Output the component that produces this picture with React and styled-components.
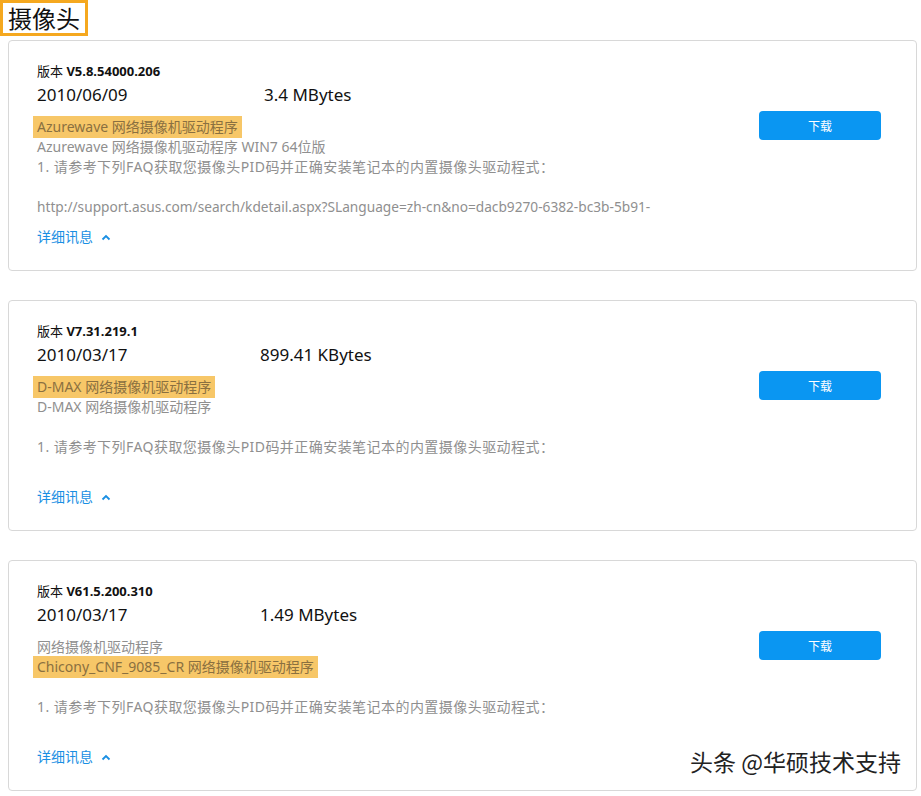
import React from 'react'
import styled, { createGlobalStyle } from 'styled-components'

const GlobalStyle = createGlobalStyle`
  body {
    margin: 0;
    background: #fff;
    font-family: "Noto Sans", "Noto Sans CJK SC", sans-serif;
  }
`

const Page = styled.div`
  position: relative;
  padding: 0 4px 4px 8px;
`

const Heading = styled.div`
  display: inline-block;
  margin-left: -8px;
  padding: 0 5px;
  height: 30px;
  line-height: 30px;
  border: 3px solid #f5a81f;
  font-size: 24px;
  color: #111;
  font-family: "Noto Sans CJK SC", sans-serif;
`

const List = styled.div`
  display: flex;
  flex-direction: column;
  gap: 29px;
  margin-top: 4px;
`

const Card = styled.div`
  display: flex;
  justify-content: space-between;
  align-items: flex-start;
  height: 231px;
  box-sizing: border-box;
  border: 1px solid #d8d8d8;
  border-radius: 4px;
  padding: 21px 35px 0 28px;
`

const Info = styled.div`
  display: flex;
  flex-direction: column;
`

const Version = styled.div`
  font-size: 13px;
  line-height: 18px;
  color: #111;
  b {
    font-weight: 700;
  }
`

const Meta = styled.div`
  display: flex;
  font-size: 17px;
  line-height: 30px;
  color: #111;
  margin-bottom: 7px;
`

const Date = styled.span`
  width: ${(p) => p.$w}px;
`

const Line = styled.div`
  font-size: ${(p) => (p.$url ? 13.7 : 14)}px;
  letter-spacing: ${(p) => (p.$wide ? 0.45 : 0)}px;
  line-height: 20px;
  height: 20px;
  color: #8f8f8f;
  white-space: nowrap;
`

const Mark = styled.span`
  background: #f7c768;
  color: #8a7040;
  padding: 1px 4px 2px;
  margin-left: -4px;
`

const More = styled.div`
  display: flex;
  align-items: center;
  gap: 8px;
  margin-top: 10px;
  font-size: 14px;
  line-height: 20px;
  color: #1a8fe3;
`

const Download = styled.button`
  margin-top: 49px;
  width: 122px;
  height: 29px;
  border: none;
  border-radius: 4px;
  background: #0a96f2;
  color: #fff;
  font-size: 12px;
  font-family: "Noto Sans CJK SC", sans-serif;
  cursor: pointer;
`

const Watermark = styled.div`
  position: absolute;
  right: 20px;
  bottom: 17px;
  font-size: 23px;
  color: #222;
  font-family: "Noto Sans CJK SC", sans-serif;
  text-shadow: 1px 1px 0 #fff, -1px -1px 0 #fff, 1px -1px 0 #fff, -1px 1px 0 #fff;
`

const Chevron = () => (
  <svg width="10" height="7" viewBox="0 0 10 7">
    <path d="M1.5 5.5 L5 2 L8.5 5.5" fill="none" stroke="#1a8fe3" strokeWidth="1.8" />
  </svg>
)

const faq = '1. 请参考下列FAQ获取您摄像头PID码并正确安装笔记本的内置摄像头驱动程式：'

const items = [
  {
    version: 'V5.8.54000.206',
    date: '2010/06/09',
    size: '3.4 MBytes',
    w: 227,
    lines: [
      { t: 'Azurewave 网络摄像机驱动程序', mark: true },
      { t: 'Azurewave 网络摄像机驱动程序 WIN7 64位版' },
      { t: faq, wide: true },
      { t: '' },
      { t: 'http://support.asus.com/search/kdetail.aspx?SLanguage=zh-cn&no=dacb9270-6382-bc3b-5b91-', url: true },
    ],
  },
  {
    version: 'V7.31.219.1',
    date: '2010/03/17',
    size: '899.41 KBytes',
    w: 223,
    lines: [
      { t: 'D-MAX 网络摄像机驱动程序', mark: true },
      { t: 'D-MAX 网络摄像机驱动程序' },
      { t: '' },
      { t: faq, wide: true },
      { t: '' },
    ],
  },
  {
    version: 'V61.5.200.310',
    date: '2010/03/17',
    size: '1.49 MBytes',
    w: 223,
    lines: [
      { t: '网络摄像机驱动程序' },
      { t: 'Chicony_CNF_9085_CR 网络摄像机驱动程序', mark: true },
      { t: '' },
      { t: faq, wide: true },
      { t: '' },
    ],
  },
]

export default function App() {
  return (
    <Page>
      <GlobalStyle />
      <Heading>摄像头</Heading>
      <List>
        {items.map((it) => (
          <Card key={it.version}>
            <Info>
              <Version>
                版本 <b>{it.version}</b>
              </Version>
              <Meta>
                <Date $w={it.w}>{it.date}</Date>
                <span>{it.size}</span>
              </Meta>
              {it.lines.map((l, i) => (
                <Line key={i} $url={l.url} $wide={l.wide}>
                  {l.mark ? <Mark>{l.t}</Mark> : l.t}
                </Line>
              ))}
              <More>
                详细讯息 <Chevron />
              </More>
            </Info>
            <Download>下载</Download>
          </Card>
        ))}
      </List>
      <Watermark>头条 @华硕技术支持</Watermark>
    </Page>
  )
}
